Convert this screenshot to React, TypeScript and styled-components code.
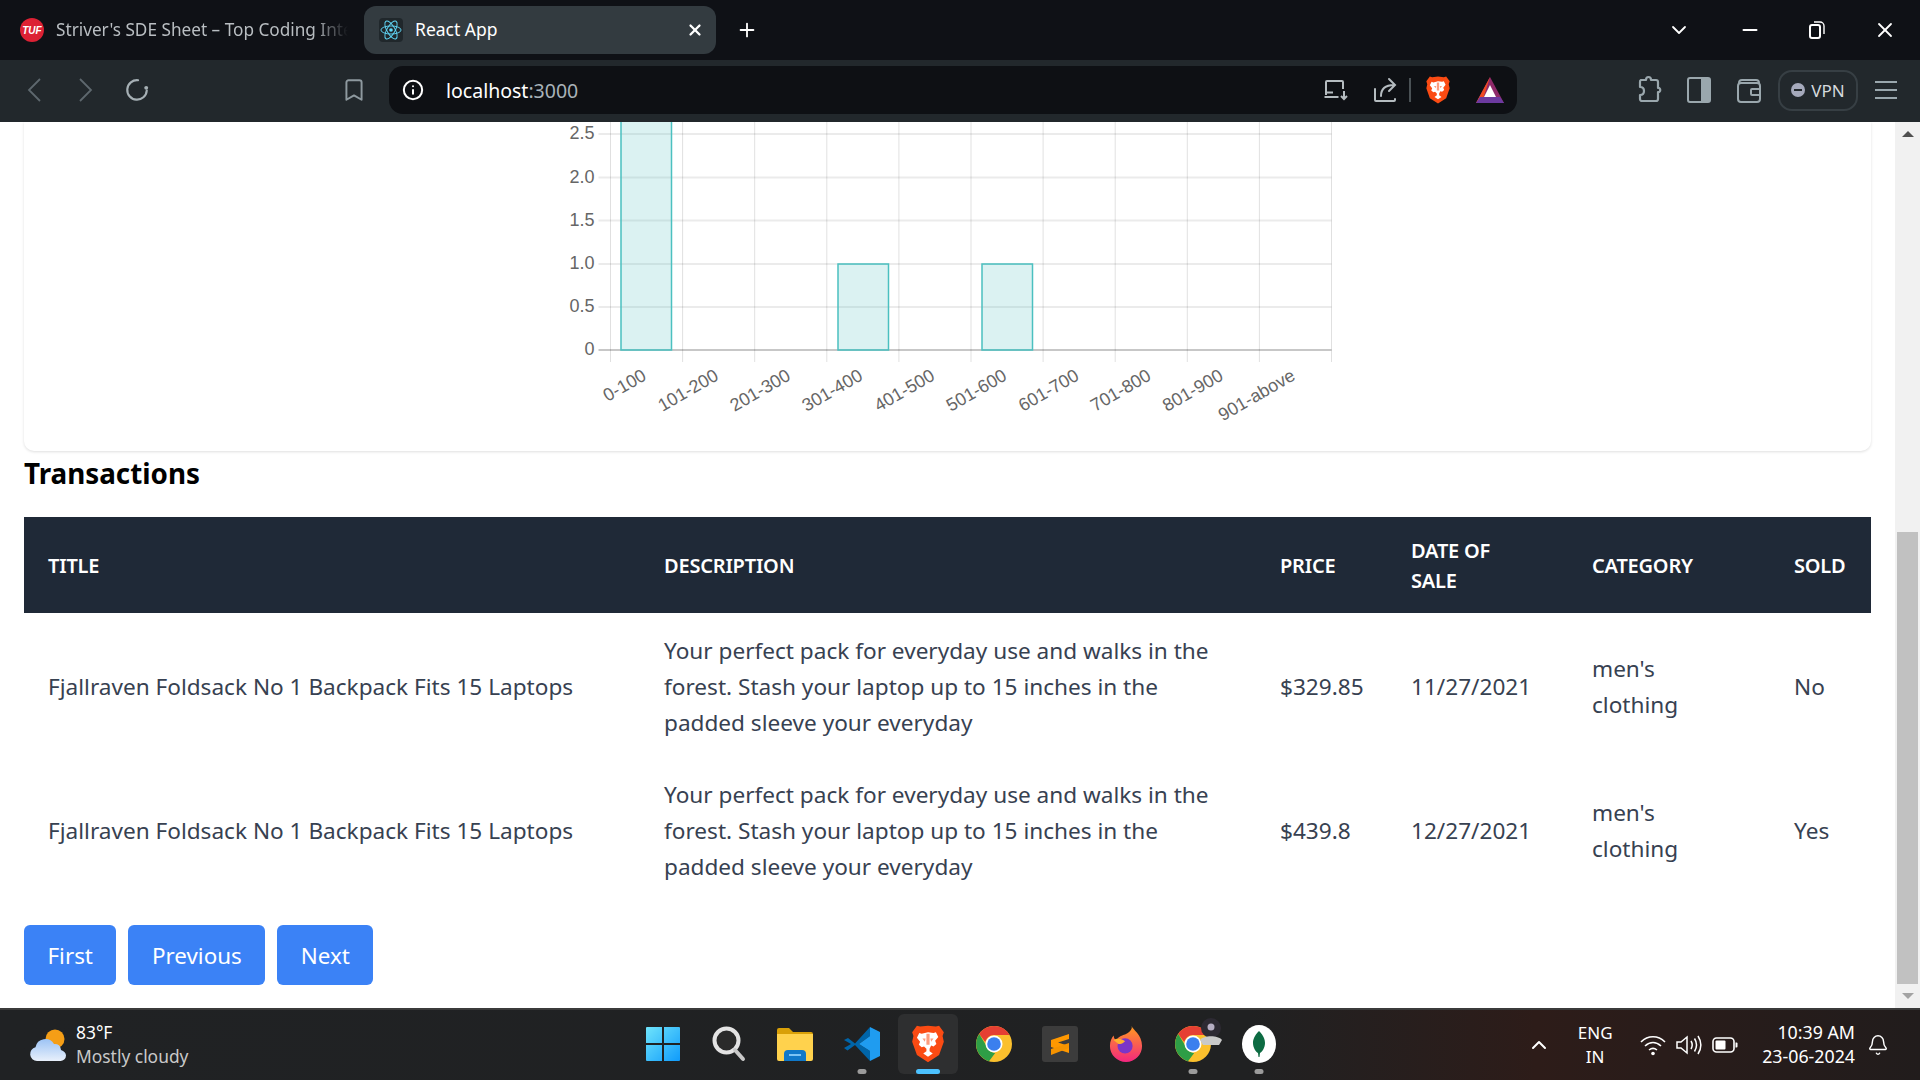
import React from "react";
import styled, { createGlobalStyle } from "styled-components";
import { Bookmark, ChevronDown, ChevronUp, Info, Minus, Plus, X, Bell } from "lucide-react";

const UI = `"Noto Sans", "Open Sans", sans-serif`;

const Global = createGlobalStyle`
  html, body { margin: 0; padding: 0; overflow: hidden; background: #fff; }
  * { box-sizing: border-box; }
`;

const Screen = styled.div`
  width: 1920px; height: 1080px; display: flex; flex-direction: column; overflow: hidden; font-family: ${UI};
`;

/* ---------- browser chrome ---------- */
const TabStrip = styled.div`
  height: 60px; flex: none; background: #0f1116; display: flex; align-items: center; padding-left: 20px; color: #fff;
`;
const IdleTab = styled.div`
  width: 344px; display: flex; align-items: center; gap: 12px; flex: none;
`;
const TufLogo = styled.span`
  width: 24px; height: 24px; border-radius: 50%; background: #dc2134; color: #fff; flex: none;
  font: italic 700 10px "Liberation Sans", sans-serif; display: flex; align-items: center; justify-content: center;
`;
const FadedTitle = styled.span`
  width: 292px; white-space: nowrap; font-size: 17.2px; color: #b9bec2; padding-bottom: 2px;
  -webkit-mask-image: linear-gradient(to right, #000 88%, transparent 100%);
  mask-image: linear-gradient(to right, #000 88%, transparent 100%);
`;
const ActiveTab = styled.div`
  width: 352px; height: 48px; flex: none; background: #333b40; border-radius: 12px; display: flex; align-items: center;
  padding: 0 12px 0 15px; gap: 12px; font-size: 17.5px;
`;
const TabLabel = styled.span` flex: 1; padding-bottom: 2px; `;
const ReactBadge = styled.span`
  width: 24px; height: 24px; background: #20272b; border-radius: 4px; display: flex; align-items: center; justify-content: center;
`;
const NewTab = styled.span` margin-left: 20px; display: flex; `;
const WindowControls = styled.div`
  margin-left: auto; display: flex; align-items: center; width: 253px; padding-right: 23px; justify-content: space-between;
`;
const Toolbar = styled.div`
  height: 62px; flex: none; background: #22282c; display: flex; align-items: center; padding: 0 0 2px 26px;
`;
const NavGroup = styled.div`
  display: flex; align-items: center; gap: 34px; width: 315px;
`;
const ReloadSlot = styled.span` display: flex; margin-left: -4px; `;
const BookmarkSlot = styled.span` width: 48px; display: flex; color: #8e999f; `;
const AddressBar = styled.div`
  width: 1128px; height: 48px; background: #0e1014; border-radius: 14px; display: flex; align-items: center; padding: 0 13px 0 13px; flex: none;
`;
const UrlText = styled.span`
  color: #fff; font-size: 19.5px; margin-left: 22px; flex: 1;
`;
const UrlPort = styled.span` color: #a9b3b9; `;
const AddressActions = styled.div` display: flex; align-items: center; gap: 24px; color: #b5bcc0; `;
const Divider = styled.span` width: 2px; height: 24px; background: #4a5155; margin: 0 -11px 0 -13px; `;
const ToolIcons = styled.div`
  display: flex; align-items: center; margin-left: 121px; gap: 25px; color: #9aa7ad;
`;
const VpnPill = styled.div`
  width: 80px; height: 41px; border: 2px solid #373f44; border-radius: 14px; display: flex; align-items: center; justify-content: center;
  gap: 6px; color: #d6dadd; font-size: 17px; margin-left: -9px; margin-right: -8px;
`;
const VpnDot = styled.span`
  width: 14px; height: 14px; border-radius: 50%; background: #a5a9bb; display: flex; align-items: center; justify-content: center;
  &::after { content: ""; width: 8px; height: 2px; background: #22282c; }
`;

/* ---------- page ---------- */
const Viewport = styled.div` flex: 1; min-height: 0; display: flex; `;
const Page = styled.main` flex: 1; min-width: 0; padding: 0 24px; background: #fff; `;
const ChartCard = styled.section`
  height: 329px; background: #fff; border-radius: 0 0 10px 10px; display: flex; justify-content: center;
  box-shadow: 0 1px 3px rgba(0,0,0,.13); overflow: hidden;
`;
const Heading = styled.h2`
  margin: 0 0 21px; font-size: 27.8px; line-height: 45px; font-weight: 700; color: #000;
`;
const Table = styled.table`
  width: 1847px; table-layout: fixed; border-collapse: collapse; font-size: 22.6px; line-height: 36px; color: #374151;
`;
const HeadCell = styled.th`
  background: #1f2937; color: #fff; text-align: left; text-transform: uppercase; font-size: 20px; font-weight: 600; line-height: 30px;
  padding: 19px 24px 17px; letter-spacing: -0.2px;
`;
const Cell = styled.td`
  padding: 20px 24px 16px; vertical-align: middle;
`;
const Pager = styled.nav` display: flex; gap: 12px; margin-top: 24px; `;
const PageButton = styled.button`
  height: 60px; padding: 2px 23.5px 0; border: none; border-radius: 6px; background: #3b82f6; color: #fff; font: 400 22.4px/1 ${UI};
`;
const ScrollTrack = styled.div`
  width: 25px; flex: none; background: #f1f1f1; display: flex; flex-direction: column; align-items: center; justify-content: space-between;
`;
const Arrow = styled.span<{ $up?: boolean }>`
  width: 0; height: 0; border-left: 6px solid transparent; border-right: 6px solid transparent; margin: 9px 0;
  ${(p) => (p.$up ? "border-bottom: 6px solid #505050;" : "border-top: 6px solid #a3a3a3;")}
`;
const ScrollThumb = styled.div`
  width: 21px; height: 452px; background: #c1c1c1; margin-top: 385px;
`;

/* ---------- taskbar ---------- */
const Taskbar = styled.footer`
  height: 72px; flex: none; border-top: 2px solid #3b3b3b; background: linear-gradient(90deg, #202224 0%, #202122 65%, #2d1c19 80%, #211c1c 100%);
  display: grid; grid-template-columns: 630px 662px 1fr; align-items: center; color: #fff;
`;
const Weather = styled.div` display: flex; align-items: center; gap: 9px; padding-left: 29px; `;
const WeatherText = styled.div` font-size: 17.4px; line-height: 24px; margin-top: -3px; `;
const WeatherSub = styled.div` color: #c9c9c9; `;
const Apps = styled.div` display: flex; margin-top: -2px; `;
const AppCell = styled.div<{ $active?: boolean }>`
  width: 66.2px; height: 60px; display: flex; align-items: center; justify-content: center; position: relative; border-radius: 6px; flex: none;
  ${(p) => p.$active && "background: #2e2f30; width: 60px; margin: 0 3.1px;"}
`;
const RunDot = styled.span<{ $active?: boolean }>`
  position: absolute; bottom: 0; left: 50%; transform: translateX(-50%); height: 5px; border-radius: 3px;
  width: ${(p) => (p.$active ? "24px" : "9px")}; background: ${(p) => (p.$active ? "#4cc2ff" : "#9b9b9b")};
`;
const Tray = styled.div` display: flex; align-items: center; justify-content: flex-end; padding-right: 31px; `;
const Lang = styled.div` font-size: 17px; line-height: 24px; text-align: center; margin: 0 0 0 19px; width: 50px; `;
const TrayIcons = styled.div` display: flex; align-items: center; gap: 10px; margin: 0 24px 0 20px; `;
const Clock = styled.div` font-size: 17.8px; line-height: 24px; text-align: right; margin: -3px 12px 0 0; `;

/* ---------- drawings ---------- */
const ThinChevron = ({ dir }: { dir: "left" | "right" }) => (
  <svg width="17" height="26" viewBox="0 0 17 26" fill="none" stroke="#5e686e" strokeWidth="1.800">
    <path d={dir === "left" ? "M14 2 3 13l11 11" : "M3 2l11 11L3 24"} />
  </svg>
);
const ReactAtom = () => (
  <svg width="22" height="22" viewBox="-12 -12 24 24" fill="none" stroke="#61dafb" strokeWidth="1">
    <circle r="2" fill="#61dafb" stroke="none" />
    <ellipse rx="11" ry="4.4" />
    <ellipse rx="11" ry="4.4" transform="rotate(60)" />
    <ellipse rx="11" ry="4.4" transform="rotate(120)" />
  </svg>
);
const Reload = () => (
  <svg width="26" height="26" viewBox="0 0 24 24" fill="none" stroke="#a6b0b5" strokeWidth="2" strokeLinecap="round">
    <path d="M13 3a9 9 0 1 0 8 9.500" />
    <circle cx="20.500" cy="10" r="1.800" fill="#a6b0b5" stroke="none" />
  </svg>
);
const RestoreIcon = () => (
  <svg width="16" height="18" viewBox="0 0 16 18" fill="none" stroke="#fff" strokeWidth="2">
    <rect x="1" y="4" width="10" height="13" rx="2" />
    <path d="M5 1h6a4 4 0 0 1 4 4v8" strokeWidth="1.4" />
  </svg>
);
const CastIcon = () => (
  <svg width="26" height="24" viewBox="0 0 26 24" fill="none" stroke="#b5bcc0" strokeWidth="2">
    <path d="M20 11V4a1 1 0 0 0-1-1H4a1 1 0 0 0-1 1v13M1.500 19h14" />
    <path d="M4 14.500h6" />
    <path d="M21 13v8M18 18l3 3 3-3" />
  </svg>
);
const ShareIcon = () => (
  <svg width="25" height="26" viewBox="0 0 25 26" fill="none" stroke="#b5bcc0" strokeWidth="2" strokeLinecap="round">
    <path d="M2 12v11a1 1 0 0 0 1 1h18a1 1 0 0 0 1-1v-1" />
    <path d="M8 19c0-7 4-11 13-11M16 2l6 6-6 6" />
  </svg>
);
const BraveLogo = ({ size = 26 }: { size?: number }) => (
  <svg width={size} height={size} viewBox="0 0 24 24">
    <path d="M12 .5 17 1l2-.5 3 4-.8 2.500.8 3.500-3 8.500-7 4.500-7-4.500-3-8.500.8-3.500-.8-2.500 3-4L7 1z" fill="#fb4b13" />
    <path d="M12 4.500l3.500.5 1.500-.5 1.500 3-2 2.500.8 2-1.800 1.500-1.500-.5L13 15v1.500l2 1.500-3 2-3-2 2-1.500V15l-1.500-1.500-1.500.5-1.800-1.500.8-2-2-2.500 1.500-3 1.500.5z" fill="#fff" />
    <path d="M10.500 8.500h-2l1.500 2zM13.500 8.500h2l-1.500 2zM11 5.500h2v7h-2z" fill="#fb4b13" opacity=".55" />
  </svg>
);
const BatLogo = () => (
  <svg width="28" height="26" viewBox="0 0 28 26">
    <path d="M14 0 28 26H0z" fill="#8f2a6a" />
    <path d="M14 0 0 26l7-4z" fill="#f04a23" />
    <path d="M0 26h28l-4-6H4z" fill="#6c3aa0" />
    <path d="M14 8 20 20H8z" fill="#fff" />
  </svg>
);
const PuzzleIcon = () => (
  <svg width="24" height="30" viewBox="0 0 24 30" fill="none" stroke="#9aa7ad" strokeWidth="2.200" strokeLinejoin="round">
    <path d="M3 5h5c0-4 5-4 5 0h5a2 2 0 0 1 2 2v6c3-.5 3 4.500 0 4v7a2 2 0 0 1-2 2H4a2 2 0 0 1-2-2v-4c3 0 4-2 4-4s-1-4-4-4V7a2 2 0 0 1 1-2z" />
  </svg>
);
const SidebarIcon = () => (
  <svg width="24" height="26" viewBox="0 0 24 26">
    <rect x="1" y="1" width="22" height="24" rx="2" fill="none" stroke="#9aa7ad" strokeWidth="2" />
    <rect x="14" y="1" width="9" height="24" fill="#9aa7ad" />
  </svg>
);
const WalletIcon = () => (
  <svg width="26" height="26" viewBox="0 0 26 26" fill="none" stroke="#9aa7ad" strokeWidth="2">
    <path d="M3 6a3 3 0 0 1 3-3h14a3 3 0 0 1 3 3" />
    <rect x="2" y="6" width="22" height="19" rx="3" />
    <rect x="15" y="12" width="9" height="6" rx="1" />
  </svg>
);
const MenuIcon = () => (
  <svg width="22" height="20" viewBox="0 0 22 20" stroke="#9aa7ad" strokeWidth="2">
    <path d="M0 2h22M0 10h22M0 18h22" />
  </svg>
);
const WeatherIcon = () => (
  <svg width="38" height="34" viewBox="0 0 38 34">
    <defs>
      <linearGradient id="cl" x1="0" y1="0" x2="0" y2="1">
        <stop offset="0" stopColor="#9cc3f5" />
        <stop offset="1" stopColor="#e8f0fb" />
      </linearGradient>
    </defs>
    <circle cx="26" cy="11" r="9.500" fill="#f59e16" />
    <path d="M8 33a7 7 0 0 1-1.500-13.800A10 10 0 0 1 25 16a6 6 0 0 1 7 6c3 1 5 3 5 5.500A5.500 5.500 0 0 1 31 33z" fill="url(#cl)" />
  </svg>
);
const WinLogo = () => (
  <svg width="36" height="36" viewBox="0 0 36 36">
    <defs>
      <linearGradient id="win" x1="0" y1="0" x2="1" y2="1">
        <stop offset="0" stopColor="#6fe4fb" />
        <stop offset="1" stopColor="#0f9bfb" />
      </linearGradient>
    </defs>
    <path d="M1 2a1 1 0 0 1 1-1h15v16H1zM19 1h15a1 1 0 0 1 1 1v15H19zM1 19h16v16H2a1 1 0 0 1-1-1zM19 19h16v15a1 1 0 0 1-1 1H19z" fill="url(#win)" />
  </svg>
);
const SearchLogo = () => (
  <svg width="34" height="36" viewBox="0 0 34 36" fill="none">
    <circle cx="14.500" cy="14.500" r="12" stroke="#e3e3e3" strokeWidth="4" fill="#2a2a2a" />
    <path d="M23 24l8 9" stroke="#c8c8c8" strokeWidth="4" strokeLinecap="round" />
  </svg>
);
const FolderLogo = () => (
  <svg width="36" height="34" viewBox="0 0 36 34">
    <path d="M0 3a2 2 0 0 1 2-2h10l4 4h18a2 2 0 0 1 2 2v6H0z" fill="#d9a008" />
    <path d="M0 7h36v25a2 2 0 0 1-2 2H2a2 2 0 0 1-2-2z" fill="#ffd24d" />
    <path d="M7 34v-7a4 4 0 0 1 4-4h14a4 4 0 0 1 4 4v7z" fill="#0f78c9" />
    <rect x="12" y="27" width="12" height="2" fill="#7cc4f5" />
  </svg>
);
const VsCodeLogo = () => (
  <svg width="36" height="36" viewBox="0 0 36 36">
    <path d="M26 1 11 17.500l-7-5.500L0 14l7 4-7 4 3.500 2.500L11 19l15 16V25L15 18l11-8z" fill="#0065a9" />
    <path d="M26 1v9l-11 8 11 7v10l10-5V6z" fill="#1f9cf0" />
  </svg>
);
const ChromeLogo = () => (
  <svg width="36" height="36" viewBox="0 0 36 36">
    <circle cx="18" cy="18" r="18" fill="#fbc02d" />
    <path d="M18 0a18 18 0 0 1 15.600 9H18a9 9 0 0 0-8.800 7L3.200 8A18 18 0 0 1 18 0z" fill="#e53f33" />
    <path d="M3.200 8l7 11.500a9 9 0 0 0 9 7.400L13 35.300A18 18 0 0 1 3.200 8z" fill="#2e9e46" />
    <circle cx="18" cy="18" r="8.500" fill="#fff" />
    <circle cx="18" cy="18" r="6.800" fill="#3b7fee" />
  </svg>
);
const SublimeLogo = () => (
  <svg width="36" height="36" viewBox="0 0 36 36">
    <rect width="36" height="36" rx="3" fill="#3c3c3c" />
    <path d="M27 8 9 14v7l18 6v-7l-11-3.500L27 13z" fill="#ff9800" />
    <path d="M9 23l18-6v5L9 29z" fill="#f59300" />
  </svg>
);
const FirefoxLogo = () => (
  <svg width="34" height="36" viewBox="0 0 36 38">
    <defs>
      <linearGradient id="ff" x1="0" y1="0" x2="0" y2="1">
        <stop offset="0" stopColor="#ff9a1f" />
        <stop offset="1" stopColor="#f4267f" />
      </linearGradient>
    </defs>
    <path d="M24 0c1 4 11 9 11 21a17 17 0 0 1-34 0C1 16 3 12 5 10c0 3 1 4 3 5 2-4 6-5 9-6 4-2 8-5 7-9z" fill="url(#ff)" />
    <circle cx="17" cy="21" r="8" fill="#7b35c8" />
    <path d="M5 15c4-3 9-1 12 1-2 2-4 3-7 3z" fill="#ffb02e" />
  </svg>
);
const ProfileBadge = styled.svg`
  position: absolute; right: 3px; top: 4px;
`;
const ChromeProfile = () => (
  <ProfileBadge width="24" height="30" viewBox="0 0 24 30">
    <circle cx="12" cy="10" r="10" fill="#2d2a33" />
    <circle cx="12" cy="9" r="3.500" fill="#b6aec4" />
    <path d="M1 22c4-5 18-5 22 0l-3 5H4z" fill="#c9c9c9" />
  </ProfileBadge>
);
const MongoLogo = () => (
  <svg width="34" height="38" viewBox="0 0 34 38">
    <ellipse cx="17" cy="19" rx="17" ry="19" fill="#fff" />
    <path d="M17 6c5 5 6 9 6 12 0 5-3 9-5 10l-.500 4h-1l-.500-4c-2-1-5-5-5-10 0-3 1-7 6-12z" fill="#0d6b42" />
  </svg>
);
const WifiIcon = () => (
  <svg width="26" height="22" viewBox="0 0 26 22" fill="none" stroke="#fff" strokeWidth="1.600">
    <path d="M1 8c7-7 17-7 24 0M5 12c5-4.500 11-4.500 16 0M9 16c2.500-2 5.500-2 8 0" />
    <circle cx="13" cy="19.500" r="1.800" fill="#fff" stroke="none" />
  </svg>
);
const SpeakerIcon = () => (
  <svg width="26" height="22" viewBox="0 0 26 22" fill="none" stroke="#fff" strokeWidth="1.500">
    <path d="M1 8v6h4l6 5V3L5 8z" />
    <path d="M15 7c1.500 2.500 1.500 5.500 0 8M18.500 4.500c2.500 4 2.500 9 0 13M22 2c3.500 5.500 3.500 12.500 0 18" />
  </svg>
);
const BatteryIcon = () => (
  <svg width="26" height="16" viewBox="0 0 26 16">
    <rect x="1" y="1" width="21" height="14" rx="3.500" fill="none" stroke="#fff" strokeWidth="1.600" />
    <rect x="3.500" y="3.500" width="10" height="9" rx="1" fill="#fff" />
    <path d="M23.500 5.500h1a1 1 0 0 1 1 1v3a1 1 0 0 1-1 1h-1z" fill="#fff" />
  </svg>
);

/* ---------- chart ---------- */
const GridLine = styled.line` stroke: rgba(0,0,0,.12); stroke-width: 1; `;
const RowLine = styled.line` stroke: rgba(0,0,0,.08); stroke-width: 2; `;
const AxisLine = styled.line` stroke: rgba(0,0,0,.22); stroke-width: 2; `;
const Bar = styled.rect` fill: rgba(75,192,192,.2); stroke: #4bc0c0; stroke-width: 1.500; `;
const AxisText = styled.text` font: 18px "Liberation Sans", Arial, sans-serif; fill: #666; `;

const xTicks = Array.from({ length: 11 }, (_, i) => 610 + i * 72.1);
const yTicks = [
  { v: "2.5", y: 134 },
  { v: "2.0", y: 177.500 },
  { v: "1.5", y: 220.500 },
  { v: "1.0", y: 264 },
  { v: "0.5", y: 307 },
  { v: "0", y: 350 },
];
const ranges = ["0-100", "101-200", "201-300", "301-400", "401-500", "501-600", "601-700", "701-800", "801-900", "901-above"];

const Chart = () => (
  <svg width="800" height="329" viewBox="547.5 122 800 329">
    {xTicks.map((x) => (
      <GridLine key={x} x1={x} x2={x} y1={122} y2={362} />
    ))}
    {yTicks.map((t) =>
      t.v === "0" ? (
        <AxisLine key={t.v} x1={598} x2={1331} y1={t.y} y2={t.y} />
      ) : (
        <RowLine key={t.v} x1={598} x2={1331} y1={t.y} y2={t.y} />
      ),
    )}
    <Bar x={620.5} y={118} width={50.5} height={232} />
    <Bar x={837.5} y={264} width={50.5} height={86} />
    <Bar x={981.5} y={264} width={50.5} height={86} />
    {yTicks.map((t) => (
      <AxisText key={t.v} x={594} y={t.y + 5} textAnchor="end">
        {t.v}
      </AxisText>
    ))}
    {ranges.map((r, i) => (
      <AxisText key={r} textAnchor="end" transform={`translate(${647 + i * 72.1} 379) rotate(-30)`}>
        {r}
      </AxisText>
    ))}
  </svg>
);

const rows = [
  { price: "$329.85", date: "11/27/2021", sold: "No" },
  { price: "$439.8", date: "12/27/2021", sold: "Yes" },
];

export default function App() {
  return (
    <Screen>
      <Global />
      <TabStrip>
        <IdleTab>
          <TufLogo>TUF</TufLogo>
          <FadedTitle>Striver's SDE Sheet – Top Coding Inte</FadedTitle>
        </IdleTab>
        <ActiveTab>
          <ReactBadge>
            <ReactAtom />
          </ReactBadge>
          <TabLabel>React App</TabLabel>
          <X size={18} strokeWidth={3} />
        </ActiveTab>
        <NewTab>
          <Plus size={22} strokeWidth={2} />
        </NewTab>
        <WindowControls>
          <ChevronDown size={24} strokeWidth={1.8} />
          <Minus size={22} strokeWidth={2.4} />
          <RestoreIcon />
          <X size={24} strokeWidth={1.8} />
        </WindowControls>
      </TabStrip>
      <Toolbar>
        <NavGroup>
          <ThinChevron dir="left" />
          <ThinChevron dir="right" />
          <ReloadSlot>
            <Reload />
          </ReloadSlot>
        </NavGroup>
        <BookmarkSlot>
          <Bookmark size={26} strokeWidth={1.8} />
        </BookmarkSlot>
        <AddressBar>
          <Info size={22} strokeWidth={2.2} color="#fff" />
          <UrlText>
            localhost<UrlPort>:3000</UrlPort>
          </UrlText>
          <AddressActions>
            <CastIcon />
            <ShareIcon />
            <Divider />
            <BraveLogo size={28} />
            <BatLogo />
          </AddressActions>
        </AddressBar>
        <ToolIcons>
          <PuzzleIcon />
          <SidebarIcon />
          <WalletIcon />
          <VpnPill>
            <VpnDot />
            VPN
          </VpnPill>
          <MenuIcon />
        </ToolIcons>
      </Toolbar>

      <Viewport>
        <Page>
          <ChartCard>
            <Chart />
          </ChartCard>
          <Heading>Transactions</Heading>
          <Table>
            <colgroup>
              <col width="616" />
              <col width="616" />
              <col width="131" />
              <col width="181" />
              <col width="202" />
              <col width="101" />
            </colgroup>
            <thead>
              <tr>
                <HeadCell>Title</HeadCell>
                <HeadCell>Description</HeadCell>
                <HeadCell>Price</HeadCell>
                <HeadCell>Date of<br />Sale</HeadCell>
                <HeadCell>Category</HeadCell>
                <HeadCell>Sold</HeadCell>
              </tr>
            </thead>
            <tbody>
              {rows.map((r) => (
                <tr key={r.date}>
                  <Cell>Fjallraven Foldsack No 1 Backpack Fits 15 Laptops</Cell>
                  <Cell>Your perfect pack for everyday use and walks in the forest. Stash your laptop up to 15 inches in the padded sleeve your everyday</Cell>
                  <Cell>{r.price}</Cell>
                  <Cell>{r.date}</Cell>
                  <Cell>men's clothing</Cell>
                  <Cell>{r.sold}</Cell>
                </tr>
              ))}
            </tbody>
          </Table>
          <Pager>
            <PageButton>First</PageButton>
            <PageButton>Previous</PageButton>
            <PageButton>Next</PageButton>
          </Pager>
        </Page>
        <ScrollTrack>
          <Arrow $up />
          <ScrollThumb />
          <Arrow />
        </ScrollTrack>
      </Viewport>

      <Taskbar>
        <Weather>
          <WeatherIcon />
          <WeatherText>
            83°F
            <WeatherSub>Mostly cloudy</WeatherSub>
          </WeatherText>
        </Weather>
        <Apps>
          <AppCell><WinLogo /></AppCell>
          <AppCell><SearchLogo /></AppCell>
          <AppCell><FolderLogo /></AppCell>
          <AppCell><VsCodeLogo /><RunDot /></AppCell>
          <AppCell $active><BraveLogo size={38} /><RunDot $active /></AppCell>
          <AppCell><ChromeLogo /></AppCell>
          <AppCell><SublimeLogo /></AppCell>
          <AppCell><FirefoxLogo /></AppCell>
          <AppCell><ChromeLogo /><ChromeProfile /><RunDot /></AppCell>
          <AppCell><MongoLogo /><RunDot /></AppCell>
        </Apps>
        <Tray>
          <ChevronUp size={24} strokeWidth={2} />
          <Lang>ENG<br />IN</Lang>
          <TrayIcons>
            <WifiIcon />
            <SpeakerIcon />
            <BatteryIcon />
          </TrayIcons>
          <Clock>10:39 AM<br />23-06-2024</Clock>
          <Bell size={22} strokeWidth={1.6} />
        </Tray>
      </Taskbar>
    </Screen>
  );
}
